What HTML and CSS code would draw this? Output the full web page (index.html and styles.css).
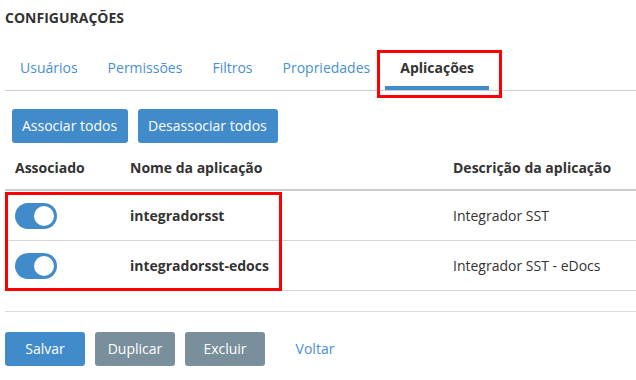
FILE: index.html
```html
<!DOCTYPE html>
<html lang="pt-BR">
<head>
    <meta charset="UTF-8">
    <meta name="viewport" content="width=device-width, initial-scale=1.0">
    <title>Configurações</title>
    <link rel="stylesheet" href="styles.css">
</head>
<body>
    <h1 class="page-title">CONFIGURAÇÕES</h1>

    <ul class="tabs">
        <li class="tab">Usuários</li>
        <li class="tab">Permissões</li>
        <li class="tab">Filtros</li>
        <li class="tab">Propriedades</li>
        <li class="tab active">Aplicações</li>
    </ul>

    <div class="toolbar">
        <button class="btn btn-primary">Associar todos</button>
        <button class="btn btn-primary">Desassociar todos</button>
    </div>

    <div class="table-wrap">
        <table class="apps">
            <thead>
                <tr>
                    <th class="col-assoc">Associado</th>
                    <th class="col-name">Nome da aplicação</th>
                    <th>Descrição da aplicação</th>
                </tr>
            </thead>
            <tbody>
                <tr>
                    <td><span class="switch on"></span></td>
                    <td class="app-name">integradorsst</td>
                    <td>Integrador SST</td>
                </tr>
                <tr>
                    <td><span class="switch on"></span></td>
                    <td class="app-name">integradorsst-edocs</td>
                    <td>Integrador SST - eDocs</td>
                </tr>
            </tbody>
        </table>
        <div class="mark-rows"></div> <!-- destaque vermelho -->
    </div>

    <hr class="divider">

    <div class="actions">
        <button class="btn btn-primary">Salvar</button>
        <button class="btn btn-gray">Duplicar</button>
        <button class="btn btn-gray">Excluir</button>
        <button class="btn btn-link">Voltar</button>
    </div>
</body>
</html>
```

FILE: styles.css
```css
body {
    margin: 0;
    padding: 8px 0 0 5px;
    font-family: "Open Sans", "Liberation Sans", sans-serif;
    font-size: 14px;
    line-height: 20px;
    color: #333;
    background: #fff;
}
.page-title {
    margin: 0;
    font-size: 14px;
    font-weight: 700;
    line-height: 20px;
    color: #333;
}
.tabs {
    display: flex;
    list-style: none;
    margin: 22px 0 0 0;
    padding: 0;
    border-bottom: 1px solid #ccc;
}
.tab {
    position: relative;
    padding: 8px 15px;
    border-bottom: 4px solid transparent;
    color: #4a8fd0;
    cursor: pointer;
}
.tab.active {
    color: #333;
    font-weight: 700;
    border-bottom-color: #428bca;
}
.tab.active::after {
    content: "";
    position: absolute;
    top: 0;
    left: -8px;
    right: -13px;
    bottom: -12px;
    border: 3px solid #f00;
}
.toolbar {
    display: flex;
    gap: 10px;
    margin: 18px 0 0 7px;
}
.btn {
    font-family: inherit;
    font-size: 14px;
    line-height: 20px;
    padding: 7px 11px 7px 10px;
    border: none;
    border-radius: 3px;
    cursor: pointer;
}
.btn-primary {
    background: #428bca;
    color: #fff;
}
.btn-gray {
    background: #7a8f9c;
    color: #fff;
}
.btn-link {
    background: none;
    color: #4a8fd0;
}
.table-wrap {
    position: relative;
    margin-top: 7px;
}
.apps {
    width: 100%;
    border-collapse: collapse;
}
.apps th {
    text-align: left;
    font-weight: 700;
    padding: 8px 10px 11px;
    border-bottom: 2px solid #ccc;
}
.apps td {
    padding: 12px 10px 11px;
    border-bottom: 1px solid #d6d6d6;
    vertical-align: middle;
}
.col-assoc {
    width: 95px;
}
.col-name {
    width: 303px;
}
.app-name {
    font-weight: 700;
}
.switch {
    display: block;
    width: 42px;
    height: 26px;
    border-radius: 13px;
    background: #ccc;
    position: relative;
}
.switch::after {
    content: "";
    position: absolute;
    top: 3px;
    left: 3px;
    width: 20px;
    height: 20px;
    border-radius: 50%;
    background: #fff;
}
.switch.on {
    background: #428bca;
}
.switch.on::after {
    left: 19px;
}
.mark-rows {
    position: absolute;
    left: 0;
    top: 42px;
    width: 277px;
    height: 99px;
    box-sizing: border-box;
    border: 3px solid #f00;
    pointer-events: none;
}
.divider {
    margin: 20px 0 0;
    border: none;
    border-top: 1px solid #ddd;
}
.actions {
    display: flex;
    gap: 10px;
    margin-top: 20px;
}
.actions .btn {
    width: 80px;
    padding-left: 0;
    padding-right: 0;
}
```
